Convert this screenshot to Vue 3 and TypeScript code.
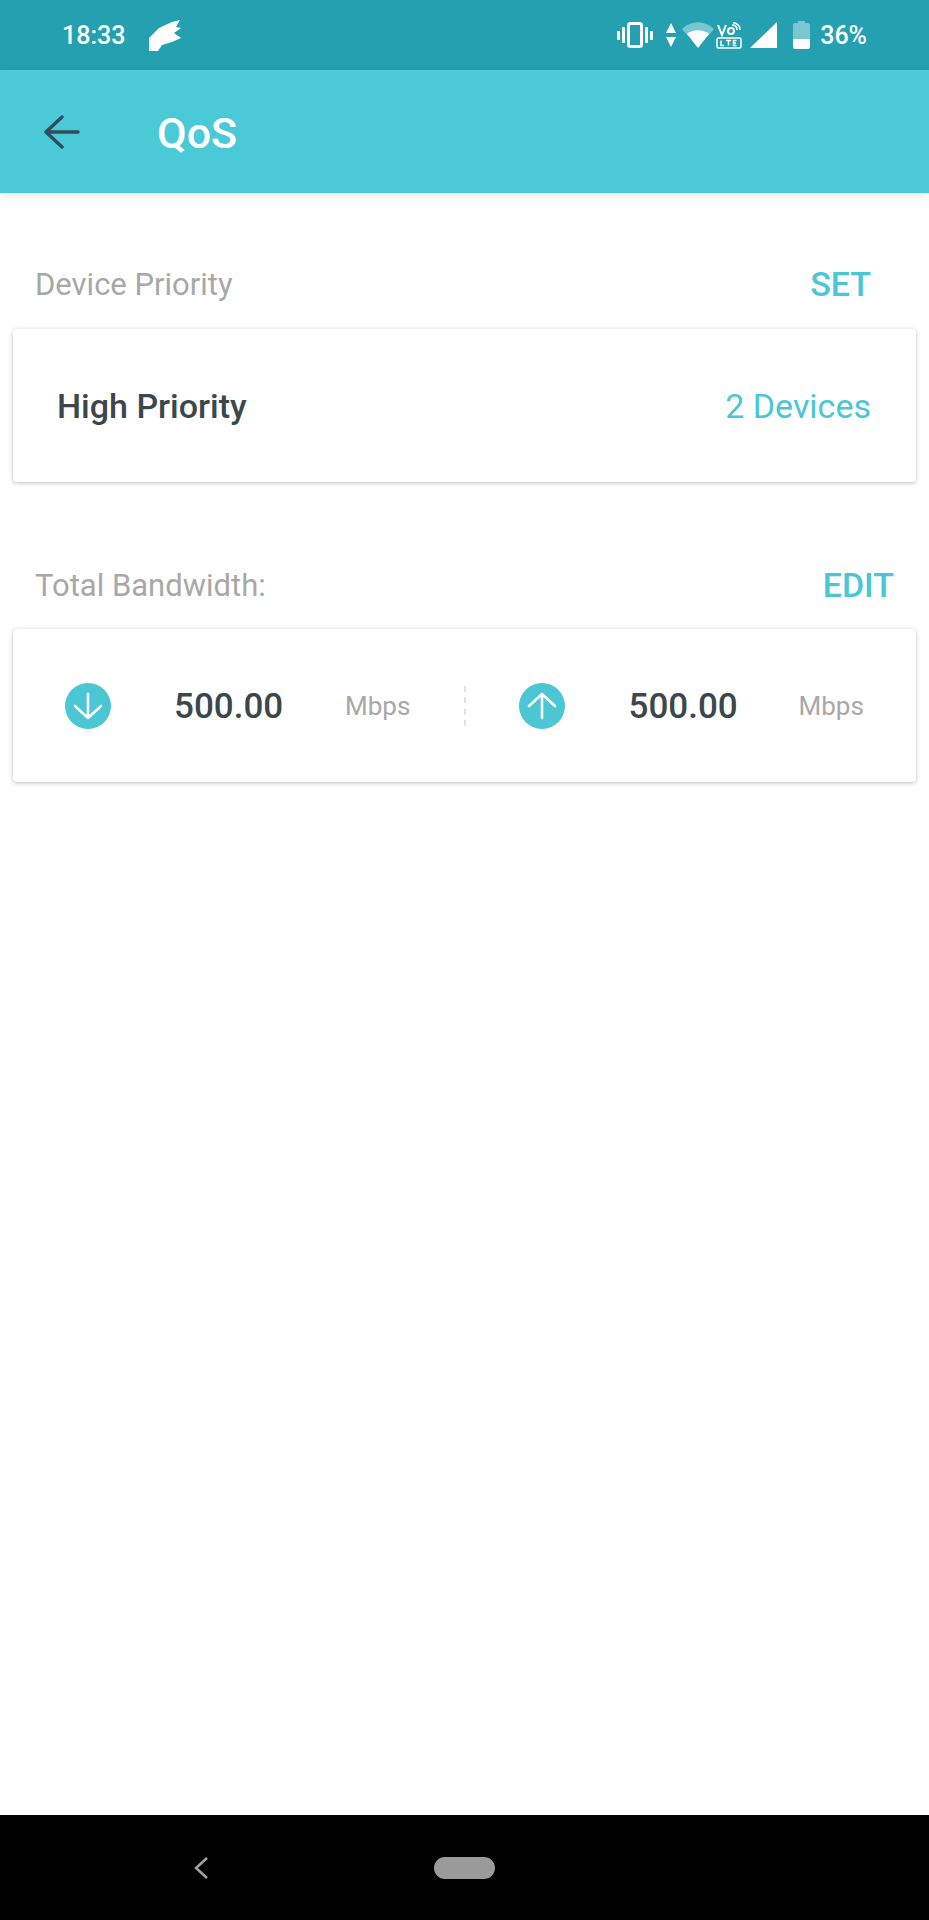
<template>
  <div class="screen">
    <div class="status-bar">
      <div class="status-left">
        <span class="time">18:33</span>
        <svg class="feather" viewBox="0 0 33 31" width="33" height="31">
          <path
            fill="#fff"
            d="M0 31 V18 L10 8 L23 2 L31 0 L27 7 L32 8 L25 13 L32 18 L23 22 L13 25 L9 31 Z"
          />
        </svg>
      </div>
      <div class="status-right">
        <svg class="vibrate" viewBox="0 0 36 26" width="36" height="26">
          <rect x="11.5" y="1.5" width="13" height="23" rx="2" fill="none" stroke="#fff" stroke-width="3" />
          <rect x="0" y="9" width="3" height="9" rx="1" fill="#fff" />
          <rect x="5" y="5" width="3" height="16" rx="1" fill="#fff" />
          <rect x="28" y="5" width="3" height="16" rx="1" fill="#fff" />
          <rect x="33" y="9" width="3" height="9" rx="1" fill="#fff" />
        </svg>
        <svg class="arrows" viewBox="0 0 10 24" width="10" height="24">
          <path fill="#fff" d="M5 0 L10 10 H0 Z M0 14 H10 L5 24 Z" />
        </svg>
        <svg class="wifi" viewBox="0 0 32 26" width="32" height="26">
          <path fill="#7cc5d1" d="M0 7 C9 -2 23 -2 32 7 L26 14 H6 Z" />
          <path fill="#fff" d="M5 12 C11 7 21 7 27 12 L16 26 Z" />
        </svg>
        <svg class="volte" viewBox="0 0 26 27" width="26" height="27">
          <path fill="none" stroke="#fff" stroke-width="2" d="M2 3 L6 13 L10 3" />
          <circle cx="15" cy="9" r="3" fill="none" stroke="#fff" stroke-width="2" />
          <path fill="none" stroke="#fff" stroke-width="1.6" d="M16 3 C19 3 21 5 21 8 M17 0.8 C21 0.8 24 4 24 8" />
          <rect x="1" y="16" width="24" height="10" rx="1.5" fill="none" stroke="#fff" stroke-width="1.5" />
          <path fill="none" stroke="#fff" stroke-width="1.5" d="M5 18.5 V23.5 H8 M10 18.5 H15 M12.5 18.5 V23.5 M20.5 18.5 H17.5 V23.5 H20.5 M17.5 21 H20" />
        </svg>
        <svg class="signal" viewBox="0 0 27 26" width="27" height="26">
          <path fill="#fff" d="M0 26 L27 0 V26 Z" />
        </svg>
        <svg class="battery" viewBox="0 0 17 28" width="17" height="28">
          <path fill="#7cc5d1" d="M5 0 H12 V2 H15 C16 2 17 3 17 4 V18 H0 V4 C0 3 1 2 2 2 H5 Z" />
          <path fill="#fff" d="M0 18 H17 V26 C17 27 16 28 15 28 H2 C1 28 0 27 0 26 Z" />
        </svg>
        <span class="percent">36%</span>
      </div>
    </div>

    <header class="app-bar">
      <svg class="back" viewBox="0 0 36 34" width="36" height="34">
        <path
          fill="none"
          stroke="#2f4d5a"
          stroke-width="3.4"
          stroke-linecap="round"
          stroke-linejoin="round"
          d="M18 2 L2 17 L18 32 M2 17 H34"
        />
      </svg>
      <h1>QoS</h1>
    </header>

    <main class="content">
      <div class="section-head first">
        <span class="section-label">Device Priority</span>
        <span class="action set">SET</span>
      </div>
      <div class="card priority">
        <span class="priority-name">High Priority</span>
        <span class="priority-count">2 Devices</span>
      </div>

      <div class="section-head second">
        <span class="section-label">Total Bandwidth:</span>
        <span class="action">EDIT</span>
      </div>
      <div class="card bandwidth">
        <div v-for="item in bandwidth" :key="item.id" class="band">
          <svg class="band-icon" viewBox="0 0 46 46" width="46" height="46">
            <circle cx="23" cy="23" r="23" fill="#4ac6d4" />
            <path
              fill="none"
              stroke="#fff"
              stroke-width="2.6"
              stroke-linecap="round"
              stroke-linejoin="round"
              :d="item.arrow"
            />
          </svg>
          <span class="band-value">{{ item.value }}</span>
          <span class="band-unit">Mbps</span>
        </div>
      </div>
    </main>

    <footer class="nav-bar">
      <svg class="nav-back" viewBox="0 0 14 22" width="14" height="22">
        <path fill="none" stroke="#a3a3a3" stroke-width="2.4" d="M13 1 L2 11 L13 21" />
      </svg>
      <div class="nav-home"></div>
    </footer>
  </div>
</template>

<script setup lang="ts">
const bandwidth = [
  { id: 'down', value: '500.00', arrow: 'M23 11 V35 M10 23 L23 35 L36 23' },
  { id: 'up', value: '500.00', arrow: 'M23 35 V11 M10 23 L23 11 L36 23' },
]
</script>

<style>
html,
body {
  margin: 0;
  background: #fff;
}
</style>

<style scoped>
.screen {
  width: 929px;
  height: 1920px;
  display: flex;
  flex-direction: column;
  background: #fff;
  font-family: Roboto, 'Liberation Sans', sans-serif;
  overflow: hidden;
}

/* status bar */
.status-bar {
  height: 70px;
  flex: none;
  background: #24a0b1;
  color: #fff;
  display: flex;
  justify-content: space-between;
  align-items: center;
  padding: 0 62px;
  box-sizing: border-box;
}
.status-left,
.status-right {
  display: flex;
  align-items: center;
}
.time {
  font-size: 25px;
  font-weight: 500;
}
.feather {
  margin-left: 24px;
}
.status-right svg {
  display: block;
}
.arrows {
  margin-left: 13px;
}
.wifi {
  margin-left: 6px;
}
.volte {
  margin-left: 2px;
}
.signal {
  margin-left: 8px;
}
.battery {
  margin-left: 16px;
}
.percent {
  margin-left: 10px;
  font-size: 25px;
  font-weight: 500;
}

/* app bar */
.app-bar {
  height: 123px;
  flex: none;
  background: #4ac9d7;
  display: flex;
  align-items: center;
  padding-left: 44px;
  box-sizing: border-box;
  box-shadow: 0 2px 10px rgba(0, 0, 0, 0.1);
  position: relative;
}
.app-bar h1 {
  margin: 2px 0 0 77px;
  font-size: 43px;
  font-weight: 500;
  color: #fff;
}

/* content */
.content {
  flex: 1;
  padding: 0 13px;
}
.section-head {
  display: flex;
  justify-content: space-between;
  align-items: center;
  height: 40px;
  padding-left: 22px;
}
.section-head.first {
  margin-top: 71px;
  margin-bottom: 25px;
  padding-right: 45px;
}
.section-head.second {
  margin-top: 83px;
  margin-bottom: 24px;
  padding-right: 22px;
}
.section-label {
  font-size: 31px;
  color: #a8a8a8;
}
.action {
  font-size: 34px;
  font-weight: 500;
  color: #4ac6d4;
}
.card {
  height: 153px;
  box-sizing: border-box;
  background: #fff;
  border-radius: 4px;
  box-shadow: 0 1px 4px rgba(0, 0, 0, 0.25);
}
.priority {
  display: flex;
  justify-content: space-between;
  align-items: center;
  padding: 0 45px 0 44px;
}
.priority-name {
  font-size: 34px;
  font-weight: 500;
  color: #3c474c;
}
.priority-count {
  font-size: 34px;
  color: #4ac6d4;
}
.bandwidth {
  display: grid;
  grid-template-columns: 1fr 1fr;
  align-items: center;
  padding-top: 1px;
}
.band {
  display: flex;
  align-items: center;
  padding-left: 52px;
}
.band + .band {
  padding-left: 53px;
  border-left: 2px dashed #e2e2e2;
  height: 40px;
  margin-left: -1px;
}
.band-value {
  margin-left: 63px;
  width: 109px;
  font-size: 35px;
  font-weight: 500;
  color: #3c474c;
}
.band + .band .band-value {
  margin-left: 64px;
}
.band-unit {
  margin-left: 62px;
  font-size: 26px;
  color: #a8a8a8;
}
.band + .band .band-unit {
  margin-left: 61px;
}

/* navigation bar */
.nav-bar {
  height: 105px;
  flex: none;
  background: #000;
  display: flex;
  align-items: center;
  padding-left: 194px;
  box-sizing: border-box;
}
.nav-home {
  width: 61px;
  height: 22px;
  margin-left: 226px;
  border-radius: 11px;
  background: #9a9a9a;
}
</style>
